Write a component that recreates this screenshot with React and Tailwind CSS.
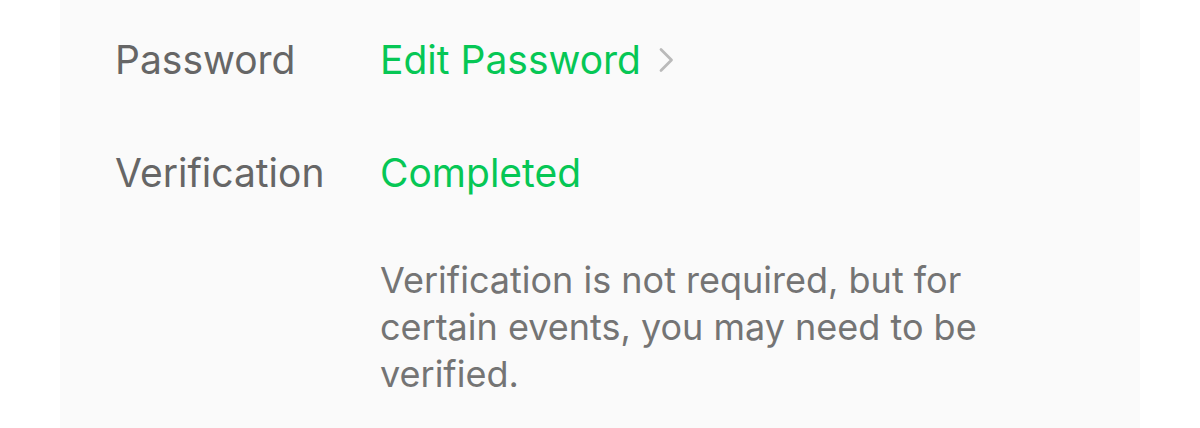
export default function App() {
  return (
    <div className="h-[428px] w-[1200px] bg-white" style={{ fontFamily: "Inter, 'Noto Sans', sans-serif" }}>
      <div className="ml-[60px] flex h-full w-[1080px] flex-col bg-[#fafafa] pl-[55px] pt-[37px]">
        <div className="flex h-[46px] items-center">
          <div className="w-[265px] text-[39px] leading-[46px] text-[#666666]">Password</div>
          <div className="flex items-center text-[39px] leading-[46px] text-[#06c755]">
            Edit Password
            <svg className="ml-[16px] h-[26px] w-[18px]" viewBox="0 0 18 26" fill="none">
              <path d="M4 2.5l10.5 10.5-10.5 10.5" stroke="#bababa" strokeWidth="2.8" strokeLinecap="round" strokeLinejoin="round" />
            </svg>
          </div>
        </div>
        <div className="mt-[67px] flex h-[46px] items-center">
          <div className="w-[265px] text-[39px] leading-[46px] text-[#666666]">Verification</div>
          <div className="text-[39px] leading-[46px] text-[#06c755]">Completed</div>
        </div>
        <p className="ml-[265px] mt-[61px] w-[660px] text-[36px] leading-[47px] text-[#747474]">
          Verification is not required, but for certain events, you may need to be verified.
        </p>
      </div>
    </div>
  );
}
